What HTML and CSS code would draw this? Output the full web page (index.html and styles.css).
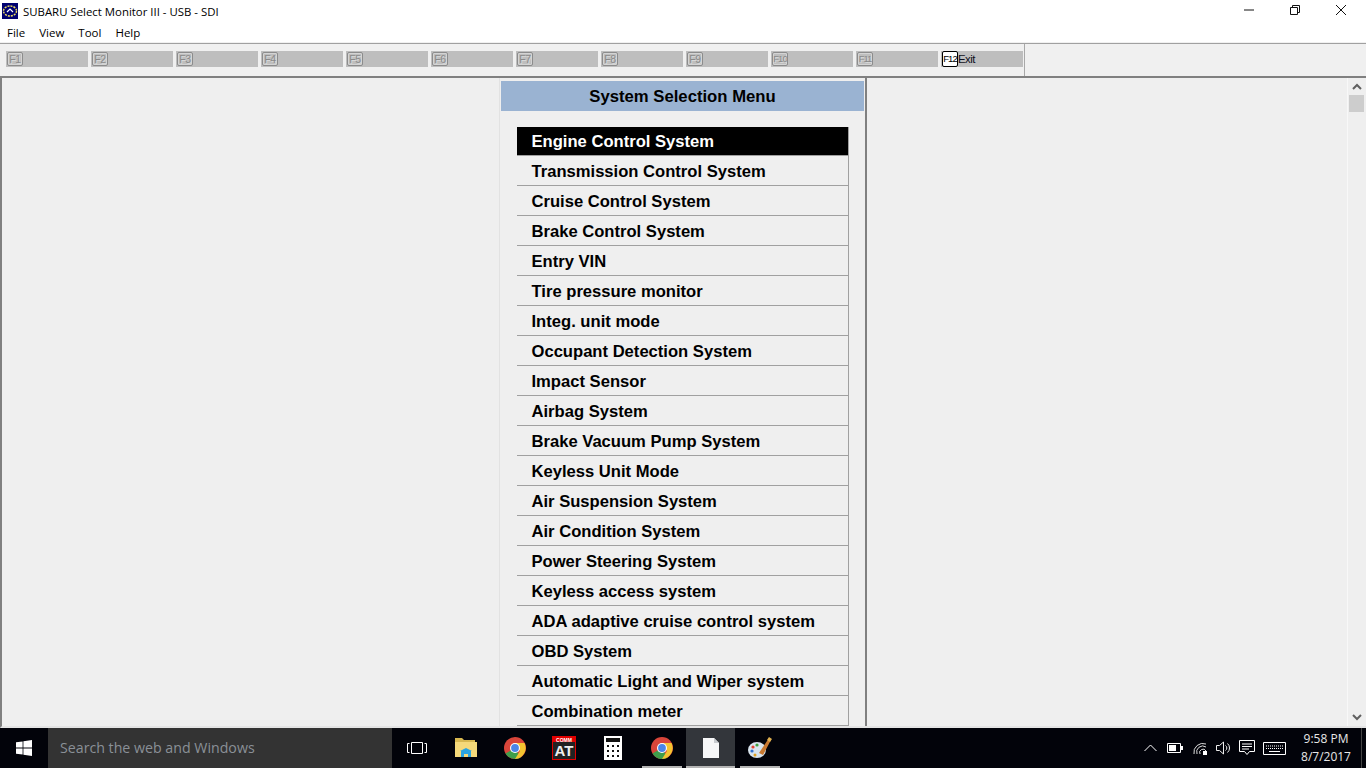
FILE: index.html
```html
<!DOCTYPE html>
<html lang="en">
<head>
<meta charset="utf-8">
<title>SUBARU Select Monitor III</title>
<link rel="stylesheet" href="styles.css">
</head>
<body>
<div class="window">
  <header class="titlebar">
    <svg class="app-icon" width="16" height="16" viewBox="0 0 16 16"><rect width="16" height="16" fill="#000070"/><ellipse cx="8" cy="8" rx="6.5" ry="5" fill="none" stroke="#f0e060" stroke-width="1.4" stroke-dasharray="2 1"/><path d="M5 9l3-3 3 3" fill="none" stroke="#fff" stroke-width="1.2"/></svg>
    <span class="title">SUBARU Select Monitor III - USB - SDI</span>
    <div class="controls">
      <svg width="12" height="12" viewBox="0 0 12 12"><path d="M1 6h10" stroke="#111" fill="none"/></svg>
      <svg width="12" height="12" viewBox="0 0 12 12"><path d="M1.500 3.500h7v7h-7zM3.500 3.500v-2h7v7h-2" stroke="#111" fill="none"/></svg>
      <svg width="12" height="12" viewBox="0 0 12 12"><path d="M1 1l10 10M11 1L1 11" stroke="#111" fill="none"/></svg>
    </div>
  </header>
  <nav class="menubar"><span>File</span><span>View</span><span>Tool</span><span>Help</span></nav>
  <div class="toolbar">
    <div class="fkeys">
      <div class="fkey"><span class="cap">F1</span></div>
      <div class="fkey"><span class="cap">F2</span></div>
      <div class="fkey"><span class="cap">F3</span></div>
      <div class="fkey"><span class="cap">F4</span></div>
      <div class="fkey"><span class="cap">F5</span></div>
      <div class="fkey"><span class="cap">F6</span></div>
      <div class="fkey"><span class="cap">F7</span></div>
      <div class="fkey"><span class="cap">F8</span></div>
      <div class="fkey"><span class="cap">F9</span></div>
      <div class="fkey"><span class="cap tight">F10</span></div>
      <div class="fkey"><span class="cap tight">F11</span></div>
      <div class="fkey active"><span class="cap tight">F12</span><span class="fkey-label">Exit</span></div>
    </div>
  </div>
  <main class="content">
    <section class="panel">
      <h1 class="panel-head">System Selection Menu</h1>
      <ul class="list">
        <li class="selected">Engine Control System</li>
        <li>Transmission Control System</li>
        <li>Cruise Control System</li>
        <li>Brake Control System</li>
        <li>Entry VIN</li>
        <li>Tire pressure monitor</li>
        <li>Integ. unit mode</li>
        <li>Occupant Detection System</li>
        <li>Impact Sensor</li>
        <li>Airbag System</li>
        <li>Brake Vacuum Pump System</li>
        <li>Keyless Unit Mode</li>
        <li>Air Suspension System</li>
        <li>Air Condition System</li>
        <li>Power Steering System</li>
        <li>Keyless access system</li>
        <li>ADA adaptive cruise control system</li>
        <li>OBD System</li>
        <li>Automatic Light and Wiper system</li>
        <li>Combination meter</li>
      </ul>
    </section>
    <aside class="scrollbar">
      <svg width="12" height="8" viewBox="0 0 12 8"><path d="M2 6l4-4 4 4" fill="none" stroke="#606060" stroke-width="2"/></svg>
      <div class="thumb"></div>
      <svg class="down" width="12" height="8" viewBox="0 0 12 8"><path d="M2 2l4 4 4-4" fill="none" stroke="#606060" stroke-width="2"/></svg>
    </aside>
  </main>
  <footer class="taskbar">
    <div class="start"><svg width="16" height="16" viewBox="0 0 16 16"><path d="M0 2.300l6.600-.9v6.200H0zM7.400 1.300L16 0v7.600H7.400zM0 8.400h6.600v6.200L0 13.700zM7.400 8.400H16V16l-8.600-1.300z" fill="#fff"/></svg></div>
    <div class="search">Search the web and Windows</div>
    <div class="task"><svg width="20" height="14" viewBox="0 0 20 14"><path d="M4.500 1.500h11v11h-11zM2.500 2.500H.5v9h2M17.500 2.500h2v9h-2" fill="none" stroke="#fff"/></svg></div>
    <div class="task"><svg width="22" height="20" viewBox="0 0 22 20"><path d="M0 0h7l2 2h11v3H0z" fill="#d8b850"/><path d="M0 4h22v15H0z" fill="#f5d97a"/><path d="M6 19v-6h10v6h-3v-3h-4v3z" fill="#2aa4e0"/><path d="M5 13l6-3 6 3z" fill="#2aa4e0"/></svg></div>
    <div class="task"><svg width="22" height="22" viewBox="0 0 22 22"><use href="#chrome"/></svg></div>
    <div class="task"><svg width="24" height="24" viewBox="0 0 24 24"><rect x=".5" y=".5" width="23" height="23" fill="#222" stroke="#e00000"/><rect x="1" y="1" width="22" height="5" fill="#e00000"/><text x="12" y="5.500" class="comm">COMM</text><text x="12" y="20" class="at">AT</text></svg></div>
    <div class="task"><svg width="18" height="24" viewBox="0 0 18 24"><rect width="18" height="24" fill="#fff"/><rect x="2" y="2" width="14" height="4" fill="#111"/><path d="M3 9h2v2H3zM8 9h2v2H8zM13 9h2v2h-2zM3 14h2v2H3zM8 14h2v2H8zM13 14h2v2h-2zM3 19h2v2H3zM8 19h2v2H8zM13 19h2v2h-2z" fill="#111"/></svg></div>
    <div class="task running"><svg width="22" height="22" viewBox="0 0 22 22"><defs><g id="chrome"><circle cx="11" cy="11" r="11" fill="#d9453a"/><path d="M11 11L1.500 16.500A11 11 0 0 0 11 22c2 0 4-.5 5.500-1.500z" fill="#3f9e4b"/><path d="M11 6h9.500A11 11 0 0 1 11 22l5-8z" fill="#f4c430"/><circle cx="11" cy="11" r="5" fill="#fff"/><circle cx="11" cy="11" r="3.900" fill="#4a86e8"/></g></defs><use href="#chrome"/></svg></div>
    <div class="task current"><svg width="16" height="20" viewBox="0 0 16 20"><path d="M0 0h11l5 5v15H0z" fill="#f6f7f8"/><path d="M11 0l5 5h-5z" fill="#c8ccd0"/></svg></div>
    <div class="task running"><svg width="24" height="24" viewBox="0 0 24 24"><ellipse cx="9" cy="14" rx="9" ry="8" fill="#d8e4ee"/><circle cx="5" cy="11" r="1.600" fill="#e04030"/><circle cx="9" cy="9" r="1.600" fill="#40a040"/><circle cx="4" cy="15" r="1.600" fill="#3070d0"/><circle cx="7" cy="19" r="1.500" fill="#e0a020"/><path d="M11 17L21 2l2 2-8 15z" fill="#c87830"/><path d="M21 1l3 2-2 3-3-2z" fill="#e0b050"/></svg></div>
    <div class="tray">
      <svg class="chev" width="13" height="8" viewBox="0 0 13 8"><path d="M.5 7l6-6 6 6" fill="none" stroke="#fff"/></svg>
      <svg width="16" height="10" viewBox="0 0 16 10"><path d="M.5.500h13v9H.500z" fill="none" stroke="#fff"/><path d="M2 2h7v6H2zM14 3h2v4h-2z" fill="#fff"/></svg>
      <svg class="wifi" width="14" height="14" viewBox="0 0 14 14"><path d="M1 13a9 9 0 0 1 12-10M4 13a6 6 0 0 1 9-7M7 13a3 3 0 0 1 6-3" fill="none" stroke="#ddd"/><rect x="10" y="10" width="4" height="4" fill="#fff"/></svg>
      <svg width="16" height="14" viewBox="0 0 16 14"><path d="M.5 4.500h3l4-3.500v12l-4-3.500h-3zM9.500 4.500a3 3 0 0 1 0 5M11.500 2.500a6 6 0 0 1 0 9" fill="none" stroke="#eee"/></svg>
      <svg class="msg" width="16" height="16" viewBox="0 0 16 16"><path d="M.5.500h15v11h-5l-2.500 3-2.500-3h-5zM3 4h10M3 6.500h10M3 9h7" fill="none" stroke="#fff"/></svg>
      <svg class="kbd" width="23" height="13" viewBox="0 0 23 13"><path d="M.5.500h22v12H.5z" fill="none" stroke="#fff"/><path d="M3 4h17M3 6.500h17" stroke="#fff" stroke-dasharray="1 1"/><path d="M6 9.500h11" stroke="#fff"/></svg>
      <div class="clock"><span>9:58 PM</span><span>8/7/2017</span></div>
    </div>
  </footer>
</div>
</body>
</html>
```
FILE: styles.css
```css
* { box-sizing: border-box; }
html, body { margin: 0; padding: 0; height: 100%; overflow: hidden; }
body { font-family: "Open Sans", "Liberation Sans", sans-serif; color: #000; background: #fff; }
.window { width: 1366px; height: 768px; display: flex; flex-direction: column; }

.titlebar { height: 22px; flex: none; display: flex; align-items: center; padding-left: 2px; background: #fff; }
.app-icon { margin-right: 5px; flex: none; }
.title { font-size: 11.400px; line-height: 16px; padding-top: 1px; }
.controls { margin-left: auto; display: flex; gap: 34px; padding-right: 19px; margin-top: -2px; }
.controls svg { display: block; }

.menubar { height: 21px; flex: none; display: flex; gap: 14px; padding: 1px 0 0 7px; font-size: 11.500px; line-height: 20px; background: #fff; border-bottom: 1px solid #f0f0f0; }

.toolbar { height: 35px; flex: none; background: #f0f0f0; border-top: 1px solid #a0a0a0; border-bottom: 2px solid #808080; }
.fkeys { width: 1025px; height: 32px; padding: 7px 0 0 6px; display: flex; gap: 3px; border-right: 1px solid #a8a8a8; align-items: flex-start; }
.fkey { width: 82px; height: 16px; background: #bebebe; display: flex; font-family: "Liberation Sans", sans-serif; }
.cap { width: 16px; height: 14px; margin: 1px 0 0 1px; border: 1px solid #8c8c8c; border-radius: 2px; color: #8a8a8a; font-size: 10.500px; line-height: 12px; text-align: center; letter-spacing: -.4px; text-shadow: 1px 1px 0 #d8d8d8; box-shadow: inset 0 0 0 1px #d4d4d4; overflow: hidden; white-space: nowrap; }
.cap.tight { font-size: 9.500px; letter-spacing: -1px; }
.active .cap { height: 16px; margin-top: 0; line-height: 14px; background: #fff; border-color: #000; color: #000; text-shadow: none; box-shadow: none; }
.fkey-label { font-size: 11.500px; line-height: 17px; letter-spacing: -.6px; color: #101020; }

.content { flex: 1; min-height: 0; position: relative; overflow: hidden; background: #efefef; border-left: 2px solid #808080; border-bottom: 2px solid #e4e4e4; }
.panel { width: 368px; height: 100%; margin-left: 497px; padding: 3px 0 0 1px; border-left: 1px solid #e2e2e2; border-right: 2px solid #808080; overflow: hidden; }
.panel-head { margin: 0; width: 363px; height: 30px; background: #9ab3d2; font: bold 16.700px/32px "Liberation Sans", sans-serif; text-align: center; }
.list { list-style: none; margin: 16px 0 0 16px; padding: 0; width: 332px; }
.list li { height: 30px; padding-left: 14.500px; border-bottom: 1px solid #a0a0a0; border-right: 1px solid #a0a0a0; font: bold 16.600px/31px "Liberation Sans", sans-serif; white-space: nowrap; }
.list .selected { height: 29px; line-height: 29px; background: #000; color: #fff; }

.scrollbar { position: absolute; right: 1px; top: 0; bottom: 0; width: 18px; border-left: 1px solid #f8f8f8; display: flex; flex-direction: column; align-items: center; padding-top: 5px; }
.thumb { width: 15px; height: 17px; background: #cdcdcd; margin-top: 4px; }
.down { margin-top: auto; margin-bottom: 5px; }

.taskbar { height: 40px; flex: none; background: #02030a; display: flex; align-items: stretch; }
.start { width: 48px; display: flex; align-items: center; justify-content: center; }
.search { width: 344px; background: #333; color: #8a9097; font-size: 14.200px; line-height: 40px; padding-left: 12px; }
.task { width: 49px; display: flex; align-items: center; justify-content: center; }
.task.running { background: linear-gradient(#b4b4b4, #b4b4b4) center bottom / 40px 2px no-repeat; }
.task.current { background: linear-gradient(#b4b4b4, #b4b4b4) center bottom / 100% 2px no-repeat, #33363b; }
.at { font: bold 15px "Liberation Sans", sans-serif; fill: #f0f0f0; text-anchor: middle; }
.comm { font: bold 5px "Liberation Sans", sans-serif; fill: #fff; text-anchor: middle; }
.tray { margin-left: auto; display: flex; align-items: center; gap: 9px; padding-right: 10px; margin-right: 4px; border-right: 1px solid #444; }
.tray svg { flex: none; }
.chev { margin-right: 1px; }
.wifi { margin-left: 1px; }
.msg { margin-left: -2px; }
.kbd { margin-left: -1px; }
.clock { width: 50px; margin-left: 6px; display: flex; flex-direction: column; align-items: center; color: #e8e8e8; font-size: 12px; line-height: 18px; }
```
